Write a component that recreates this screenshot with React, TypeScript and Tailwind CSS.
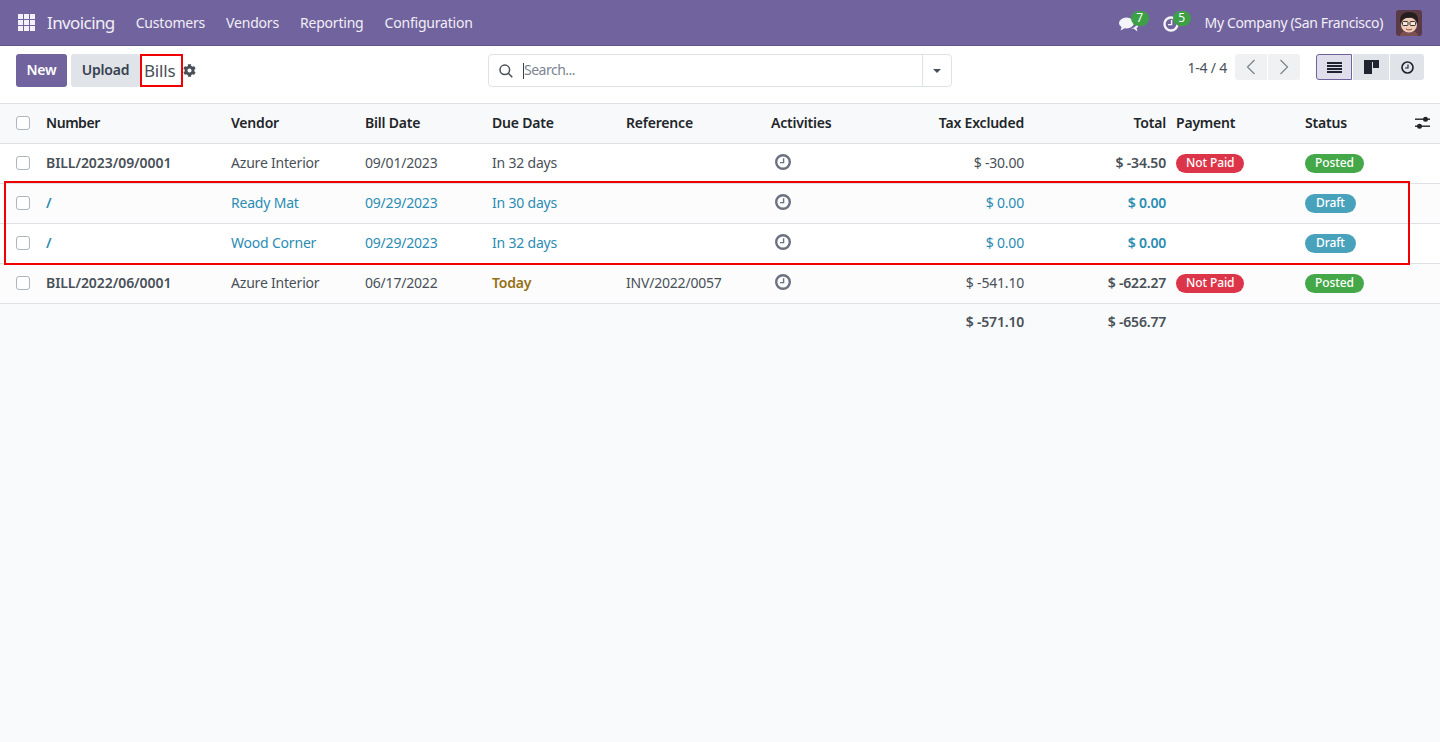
import React from "react";

const F = "font-['Noto_Sans',sans-serif]";

function Clock({ size = 16, color = "#6b7280", sw = 2.4 }: { size?: number; color?: string; sw?: number }) {
  return (
    <svg width={size} height={size} viewBox="0 0 16 16" fill="none">
      <circle cx="8" cy="8" r="6.8" stroke={color} strokeWidth={sw} />
      <path d="M8.6 4.200v4.400H5" stroke={color} strokeWidth="1.400" />
    </svg>
  );
}

function Cog() {
  return (
    <svg width="13" height="13" viewBox="0 0 512 512" fill="#495057">
      <path d="M487.4 315.7l-42.6-24.6c4.3-23.2 4.3-47 0-70.2l42.6-24.6c4.9-2.8 7.1-8.6 5.5-14-11.1-35.6-30-67.8-54.7-94.6-3.8-4.1-10-5.1-14.8-2.3L380.8 110c-17.9-15.4-38.5-27.3-60.8-35.1V25.8c0-5.6-3.9-10.5-9.4-11.7-36.7-8.2-74.3-7.8-109.2 0-5.5 1.2-9.4 6.1-9.4 11.7V75c-22.2 7.9-42.8 19.8-60.8 35.1L88.7 85.5c-4.9-2.8-11-1.9-14.8 2.3-24.7 26.7-43.6 58.9-54.7 94.6-1.7 5.4.6 11.2 5.5 14L67.3 221c-4.3 23.2-4.3 47 0 70.2l-42.6 24.6c-4.9 2.8-7.1 8.6-5.5 14 11.1 35.6 30 67.8 54.7 94.6 3.8 4.1 10 5.1 14.8 2.3l42.6-24.6c17.9 15.4 38.5 27.3 60.8 35.1v49.2c0 5.6 3.9 10.5 9.4 11.7 36.7 8.2 74.3 7.8 109.2 0 5.5-1.2 9.4-6.1 9.4-11.7v-49.2c22.2-7.9 42.8-19.8 60.8-35.1l42.6 24.6c4.9 2.8 11 1.9 14.8-2.3 24.7-26.7 43.6-58.9 54.7-94.6 1.5-5.5-.7-11.3-5.6-14.1zM256 336c-44.1 0-80-35.9-80-80s35.9-80 80-80 80 35.9 80 80-35.9 80-80 80z" />
    </svg>
  );
}

function Badge({ label, color }: { label: string; color: string }) {
  return (
    <span className={`inline-flex h-[19px] items-center rounded-full px-[10px] text-[12px] font-medium leading-none tracking-[-0.1px] text-white ${color}`}>
      {label}
    </span>
  );
}

function Check() {
  return <span className="block h-[14px] w-[14px] rounded-[3px] border border-[#adb5bd] bg-white" />;
}

type Row = {
  num: string; vendor: string; date: string; due: string; ref: string; tax: string; total: string;
  pay?: string; status: string; draft?: boolean; today?: boolean; tint?: boolean;
};

const rows: Row[] = [
  { num: "BILL/2023/09/0001", vendor: "Azure Interior", date: "09/01/2023", due: "In 32 days", ref: "", tax: "$ -30.00", total: "$ -34.50", pay: "Not Paid", status: "Posted" },
  { num: "/", vendor: "Ready Mat", date: "09/29/2023", due: "In 30 days", ref: "", tax: "$ 0.00", total: "$ 0.00", status: "Draft", draft: true, tint: true },
  { num: "/", vendor: "Wood Corner", date: "09/29/2023", due: "In 32 days", ref: "", tax: "$ 0.00", total: "$ 0.00", status: "Draft", draft: true },
  { num: "BILL/2022/06/0001", vendor: "Azure Interior", date: "06/17/2022", due: "Today", ref: "INV/2022/0057", tax: "$ -541.10", total: "$ -622.27", pay: "Not Paid", status: "Posted", today: true, tint: true },
];

export default function App() {
  return (
    <div className={`relative flex min-h-[742px] flex-col bg-[#f9fafb] text-[14px] tracking-[-0.2px] text-[#495057] ${F}`}>
      {/* navbar */}
      <nav className="flex h-[46px] items-center border-b border-[#5f5488] bg-[#71639e] pl-[18px] pr-[18px] text-white">
        <svg width="17" height="17" viewBox="0 0 17 17" fill="#f3f1f7">
          {[0, 6, 12].map((y) => [0, 6, 12].map((x) => <rect key={`${x}${y}`} x={x} y={y} width="5" height="5" />))}
        </svg>
        <span className="ml-[12px] text-[17px] tracking-[-0.6px] text-[#f1eff6]">Invoicing</span>
        <div className="ml-[21px] flex gap-[21px] text-[#f1eff6]">
          <span>Customers</span>
          <span>Vendors</span>
          <span>Reporting</span>
          <span>Configuration</span>
        </div>
        <div className="ml-auto flex items-center">
          <span className="relative mr-[24px] flex h-[20px] w-[20px] items-center">
            <svg width="20" height="16" viewBox="0 0 20 16" fill="#f5f4f9" className="mt-[4px]">
              <ellipse cx="7.500" cy="6" rx="7.500" ry="5.400" />
              <path d="M3 9l-1.500 4.500 5.500-3z" />
              <path d="M14.500 11.500l4 3-1-3.500c1-.5 1.800-1.500 1.800-2.500 0-.8-.4-1.600-1.300-2.200-.5 3-3 5-6.500 5.500z" />
            </svg>
            <span className="absolute left-[12px] top-[-2px] flex h-[15px] w-[18px] items-center justify-center rounded-full bg-[#3d9f46] text-[12px] leading-none text-white">7</span>
          </span>
          <span className="relative mr-[22px] flex h-[20px] w-[20px] items-center">
            <svg width="16" height="16" viewBox="0 0 16 16" fill="none" className="mt-[2px]">
              <circle cx="8" cy="8" r="6.500" stroke="#f5f4f9" strokeWidth="2.400" />
              <path d="M8.600 4v4.600H5" stroke="#f5f4f9" strokeWidth="1.400" />
            </svg>
            <span className="absolute left-[10px] top-[-2px] flex h-[15px] w-[18px] items-center justify-center rounded-full bg-[#3d9f46] text-[12px] leading-none text-white">5</span>
          </span>
          <span className="mr-[13px] tracking-[-0.35px] text-[#f1eff6]">My Company (San Francisco)</span>
          <svg width="26" height="26" viewBox="0 0 26 26" className="rounded-[3px]">
            <rect width="26" height="26" fill="#5a3a45" />
            <path d="M4 26c0-4 4-5 9-5s9 1 9 5z" fill="#7d4f52" />
            <ellipse cx="13" cy="15" rx="8" ry="7.500" fill="#f0cdb6" />
            <path d="M4.500 14C2.500 6 7 2 13 2s11 3.500 8.500 12l-1.500-4-3-2.500-7.500.5L6 10z" fill="#241f1d" />
            <rect x="6.500" y="11.500" width="5.500" height="4" rx="1" fill="#f7e6d8" stroke="#333" strokeWidth="1" />
            <rect x="14" y="11.500" width="5.500" height="4" rx="1" fill="#f7e6d8" stroke="#333" strokeWidth="1" />
            <path d="M10 19c2 1.200 4 1.200 6 0" stroke="#8a4a3a" strokeWidth="1" fill="none" />
          </svg>
        </div>
      </nav>

      {/* control panel */}
      <div className="flex h-[58px] items-start border-b border-[#dee2e6] bg-white pl-4 pr-4 pt-[8px]">
        <div className="flex w-[472px] items-center">
          <button className="h-[33px] w-[51px] rounded-[3px] bg-[#71639e] pb-[2px] text-[14px] font-semibold text-white">New</button>
          <button className="ml-[4px] h-[33px] w-[69px] rounded-[3px] bg-[#e0e3e7] pb-[2px] text-[14px] font-semibold text-[#374151]">Upload</button>
          <span className="ml-[4px] pb-[1px] text-[17px] leading-none text-[#495057]">Bills</span>
          <span className="ml-[8px] pb-[1px]"><Cog /></span>
        </div>
        <div className="flex h-[33px] w-[464px] items-center rounded-[4px] border border-[#dee2e6]">
          <svg width="16" height="16" viewBox="0 0 16 16" fill="none" className="ml-[9px]" stroke="#495057" strokeWidth="1.500">
            <circle cx="6.800" cy="6.800" r="4.800" />
            <path d="M10.300 10.300l4 4" />
          </svg>
          <span className="ml-[9px] h-[16px] w-px bg-[#374151]" />
          <span className="pb-[2px] text-[14px] tracking-[-0.5px] text-[#7b8490]">Search...</span>
          <span className="ml-auto flex h-full w-[29px] items-center justify-center border-l border-[#dee2e6]">
            <span className="h-0 w-0 border-x-[4.500px] border-t-[4.500px] border-x-transparent border-t-[#495057]" />
          </span>
        </div>
        <div className="ml-auto flex items-center">
          <span className="text-[14px] text-[#495057]">1-4 / 4</span>
          <div className="ml-[8px] flex h-[26px]">
            <span className="flex w-[32px] items-center justify-center rounded-l-[3px] bg-[#eff1f3]">
              <svg width="10" height="16" viewBox="0 0 10 16" fill="none" stroke="#7a828a" strokeWidth="1.200"><path d="M8.500 1L1.500 8l7 7" /></svg>
            </span>
            <span className="ml-px flex w-[32px] items-center justify-center rounded-r-[3px] bg-[#eff1f3]">
              <svg width="10" height="16" viewBox="0 0 10 16" fill="none" stroke="#7a828a" strokeWidth="1.200"><path d="M1.500 1l7 7-7 7" /></svg>
            </span>
          </div>
          <div className="ml-[16px] flex h-[26px]">
            <span className="flex w-[36px] items-center justify-center rounded-l-[3px] border border-[#71639e] bg-[#e0deeb]">
              <svg width="15" height="11" viewBox="0 0 15 11" fill="#1f2430"><rect width="15" height="2" /><rect y="3" width="15" height="2" /><rect y="6" width="15" height="2" /><rect y="9" width="15" height="2" /></svg>
            </span>
            <span className="ml-px flex w-[36px] items-center justify-center bg-[#e0e3e7]">
              <svg width="15" height="14" viewBox="0 0 15 14" fill="#1f2430"><rect width="15" height="2" /><rect y="2" width="8" height="12" /><rect x="9" y="2" width="6" height="6" /></svg>
            </span>
            <span className="ml-px flex w-[34px] items-center justify-center rounded-r-[3px] bg-[#e0e3e7]">
              <Clock size={13} color="#1f2430" sw={2} />
            </span>
          </div>
        </div>
      </div>

      {/* list */}
      <table className="w-[1440px] table-fixed border-collapse">
        <colgroup>
          <col className="w-[38px]" />
          <col className="w-[185px]" />
          <col className="w-[134px]" />
          <col className="w-[127px]" />
          <col className="w-[134px]" />
          <col className="w-[145px]" />
          <col className="w-[117px]" />
          <col className="w-[152px]" />
          <col className="w-[142px]" />
          <col className="w-[123px]" />
          <col className="w-[108px]" />
          <col className="w-[35px]" />
        </colgroup>
        <thead>
          <tr className="h-[39px] border-b border-[#dee2e6] bg-[#f8f9fa] text-left font-semibold text-[#212529]">
            <th className="pl-4 font-semibold"><Check /></th>
            <th className="px-2 pb-[2px] font-semibold tracking-[-0.45px]">Number</th>
            <th className="px-2 pb-[2px] font-semibold">Vendor</th>
            <th className="px-2 pb-[2px] font-semibold">Bill Date</th>
            <th className="px-2 pb-[2px] font-semibold">Due Date</th>
            <th className="px-2 pb-[2px] font-semibold">Reference</th>
            <th className="px-2 pb-[2px] font-semibold">Activities</th>
            <th className="px-2 pb-[2px] text-right font-semibold">Tax Excluded</th>
            <th className="px-2 pb-[2px] text-right font-semibold">Total</th>
            <th className="pb-[2px] pl-[2px] font-semibold">Payment</th>
            <th className="px-2 pb-[2px] font-semibold">Status</th>
            <th className="pl-[10px]">
              <svg width="15" height="14" viewBox="0 0 15 14" fill="#212529">
                <rect y="2.500" width="15" height="1.400" /><rect y="9.500" width="15" height="1.400" />
                <circle cx="10.500" cy="3.200" r="2.500" /><circle cx="4.500" cy="10.200" r="2.500" />
              </svg>
            </th>
          </tr>
        </thead>
        <tbody>
          {rows.map((r, i) => {
            const tone = r.draft ? "text-[#2b8cb3]" : "text-[#495057]";
            return (
              <tr key={i} className={`h-[40px] border-b border-[#dee2e6] ${r.tint ? "bg-[#fcfcfd]" : "bg-white"} ${tone}`}>
                <td className="pl-4"><Check /></td>
                <td className="px-2 pb-[2px] font-semibold tracking-[-0.07px]">{r.num}</td>
                <td className="px-2 pb-[2px]">{r.vendor}</td>
                <td className="px-2 pb-[2px]">{r.date}</td>
                <td className={`px-2 pb-[2px] ${r.today ? "font-semibold text-[#976f15]" : ""}`}>{r.due}</td>
                <td className="px-2 pb-[2px]">{r.ref}</td>
                <td className="pb-[2px] pl-[12px] pr-2"><Clock /></td>
                <td className="px-2 pb-[2px] text-right">{r.tax}</td>
                <td className="px-2 pb-[2px] text-right font-semibold">{r.total}</td>
                <td className="pb-[2px] pl-[2px]">{r.pay && <Badge label={r.pay} color="bg-[#dc3549]" />}</td>
                <td className="px-2 pb-[2px]"><Badge label={r.status} color={r.draft ? "bg-[#49a2bb] pr-[11px] pl-[11px]" : "bg-[#44a748]"} /></td>
                <td />
              </tr>
            );
          })}
          <tr className="h-[37px] font-semibold text-[#495057]">
            <td colSpan={7} />
            <td className="px-2 text-right">$ -571.10</td>
            <td className="px-2 text-right">$ -656.77</td>
            <td colSpan={3} />
          </tr>
        </tbody>
      </table>

      {/* annotations */}
      <div className="pointer-events-none absolute left-[140px] top-[54px] h-[33px] w-[43px] border-2 border-[#f00000]" />
      <div className="pointer-events-none absolute left-[4px] top-[181px] h-[84px] w-[1406px] border-2 border-[#f00000]" />
    </div>
  );
}
